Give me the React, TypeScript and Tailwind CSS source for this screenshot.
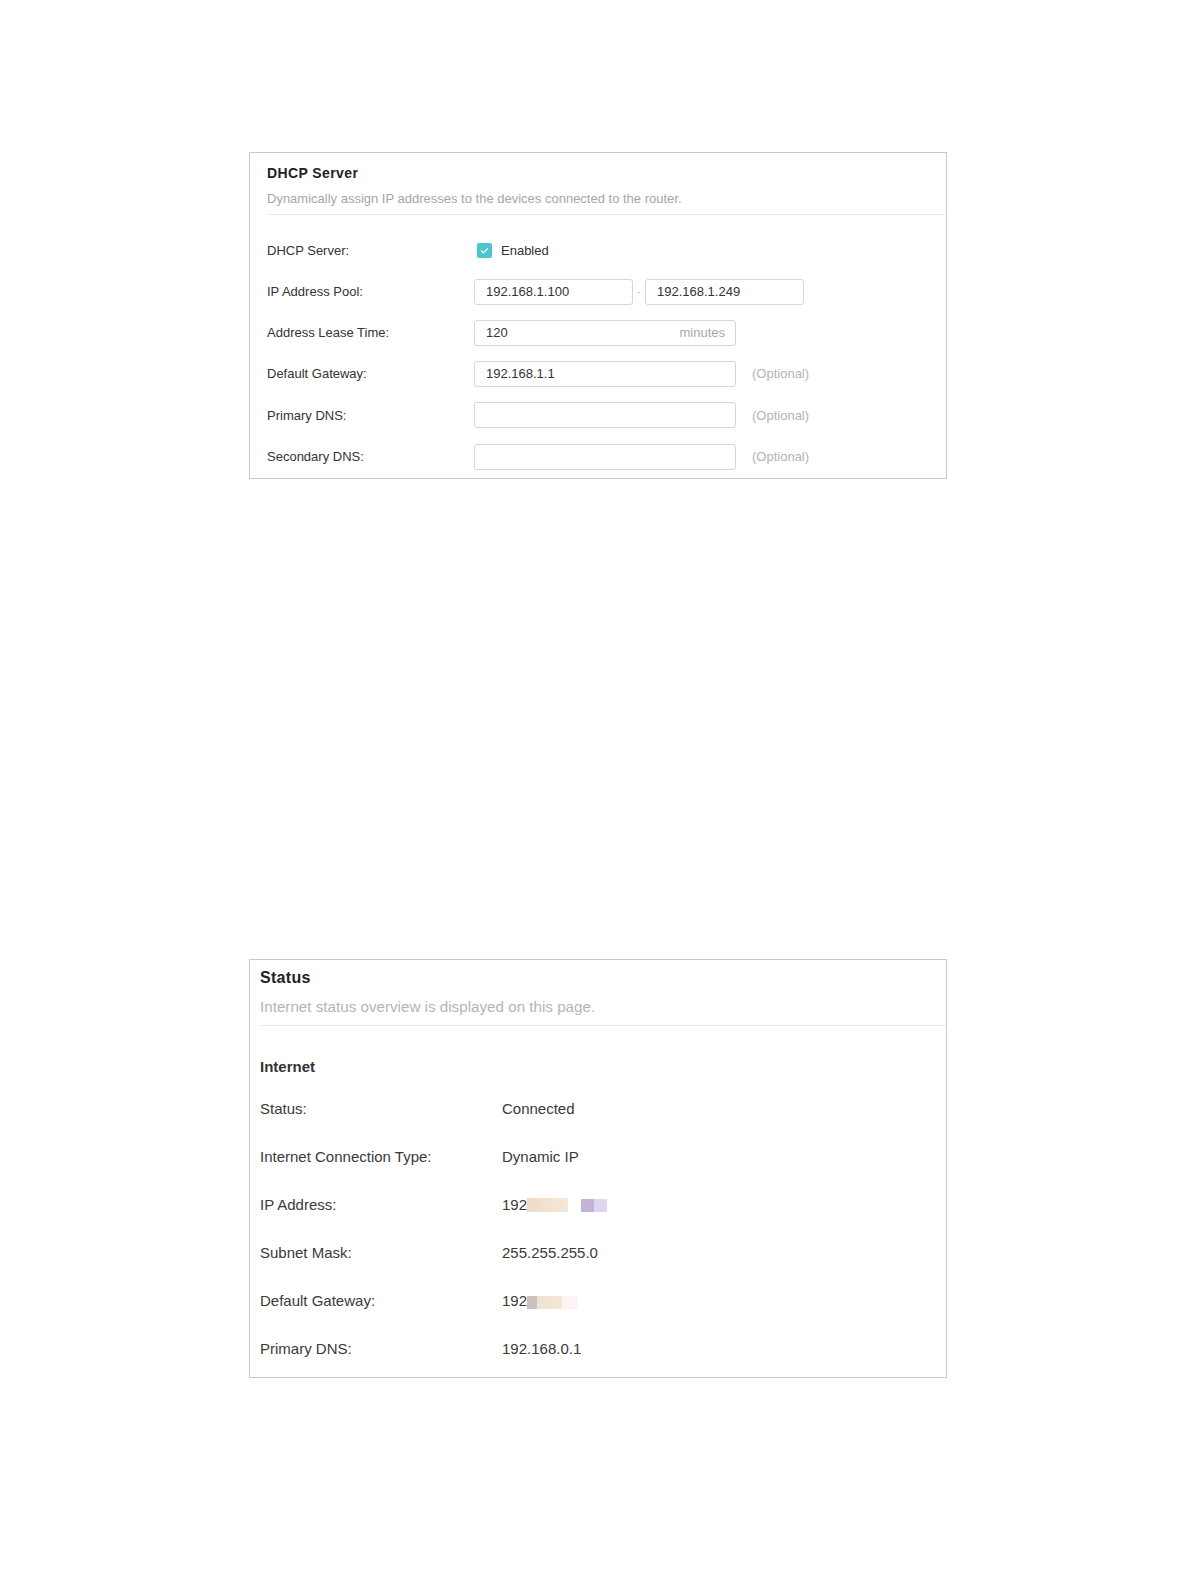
import type { ReactNode } from 'react'

const font = { fontFamily: '"Liberation Sans", Arial, sans-serif' }

function Field({
  value,
  className = 'w-[262px]',
  suffix,
}: {
  value?: string
  className?: string
  suffix?: string
}) {
  return (
    <div
      className={`flex h-[26px] items-center justify-between rounded-[3px] border border-[#d6d6d6] bg-white pl-[11px] pr-[10px] text-[13px] text-[#333] ${className}`}
    >
      <span>{value}</span>
      {suffix && <span className="text-[#a8a8a8]">{suffix}</span>}
    </div>
  )
}

function FormRow({ label, children }: { label: string; children: ReactNode }) {
  return (
    <div className="flex h-[41.2px] items-center">
      <div className="w-[207px] text-[13px] text-[#333]">{label}</div>
      <div className="flex items-center">{children}</div>
    </div>
  )
}

function Optional() {
  return <span className="ml-[16px] text-[13px] text-[#b3b3b3]">(Optional)</span>
}

function StatusRow({ label, children }: { label: string; children: ReactNode }) {
  return (
    <div className="flex h-[48px] items-center text-[15px] text-[#3a3a3a]">
      <div className="w-[242px]">{label}</div>
      <div className="flex items-center">{children}</div>
    </div>
  )
}

export default function App() {
  return (
    <div className="min-h-[1582px] bg-white pt-[152px]" style={font}>
      {/* DHCP server card */}
      <div className="mx-auto w-[698px] border border-[#c9c9c9] pb-[1px] pl-[17px] pt-[10px]">
        <div className="text-[14px] font-bold leading-[20px] tracking-[0.4px] text-[#222]">
          DHCP Server
        </div>
        <div className="mt-[7px] text-[13px] leading-[18px] text-[#a6a6a6]">
          Dynamically assign IP addresses to the devices connected to the router.
        </div>
        <div className="mr-[1px] mt-[6px] h-px bg-[#ebebeb]" />
        <div className="pt-[15px]">
          <FormRow label="DHCP Server:">
            <div className="ml-[3px] flex items-center gap-[9px]">
              <span className="flex h-[15px] w-[15px] items-center justify-center rounded-[2px] bg-[#4cc5d2]">
                <svg width="9" height="7" viewBox="0 0 9 7" fill="none">
                  <path d="M1 3.5 3.6 6 8 1" stroke="white" strokeWidth="1.2" />
                </svg>
              </span>
              <span className="text-[13px] text-[#333]">Enabled</span>
            </div>
          </FormRow>
          <FormRow label="IP Address Pool:">
            <Field value="192.168.1.100" className="w-[159px]" />
            <span className="w-[12px] text-center text-[12px] text-[#ccc]">-</span>
            <Field value="192.168.1.249" className="w-[159px]" />
          </FormRow>
          <FormRow label="Address Lease Time:">
            <Field value="120" suffix="minutes" />
          </FormRow>
          <FormRow label="Default Gateway:">
            <Field value="192.168.1.1" />
            <Optional />
          </FormRow>
          <FormRow label="Primary DNS:">
            <Field />
            <Optional />
          </FormRow>
          <FormRow label="Secondary DNS:">
            <Field />
            <Optional />
          </FormRow>
        </div>
      </div>

      {/* Status card */}
      <div className="mx-auto mt-[480px] w-[698px] border border-[#c9c9c9] pb-[4px] pl-[10px] pt-[6px]">
        <div className="text-[16px] font-bold leading-[24px] tracking-[0.3px] text-[#222]">
          Status
        </div>
        <div className="mt-[6px] text-[15.2px] leading-[22px] text-[#b5b5b5]">
          Internet status overview is displayed on this page.
        </div>
        <div className="mt-[7px] h-px bg-[#ebebeb]" />
        <div className="mt-[30px] text-[15px] font-bold leading-[22px] text-[#333]">Internet</div>
        <div className="mt-[7px]">
          <StatusRow label="Status:">Connected</StatusRow>
          <StatusRow label="Internet Connection Type:">Dynamic IP</StatusRow>
          <StatusRow label="IP Address:">
            <span>192</span>
            <span className="h-[14px] w-[41px] bg-gradient-to-r from-[#efdcc6] to-[#f5e8da]" />
            <span className="ml-[13px] h-[13px] w-[13px] bg-[#c5b3d3]" />
            <span className="h-[13px] w-[13px] bg-[#dcd7ee]" />
          </StatusRow>
          <StatusRow label="Subnet Mask:">255.255.255.0</StatusRow>
          <StatusRow label="Default Gateway:">
            <span>192</span>
            <span className="mt-[3px] h-[13px] w-[10px] bg-[#cbc3bd]" />
            <span className="mt-[3px] h-[13px] w-[25px] bg-gradient-to-r from-[#efe2d2] to-[#f4e6d8]" />
            <span className="mt-[3px] h-[13px] w-[16px] bg-[#fbf3f4]" />
          </StatusRow>
          <StatusRow label="Primary DNS:">192.168.0.1</StatusRow>
        </div>
      </div>
    </div>
  )
}
